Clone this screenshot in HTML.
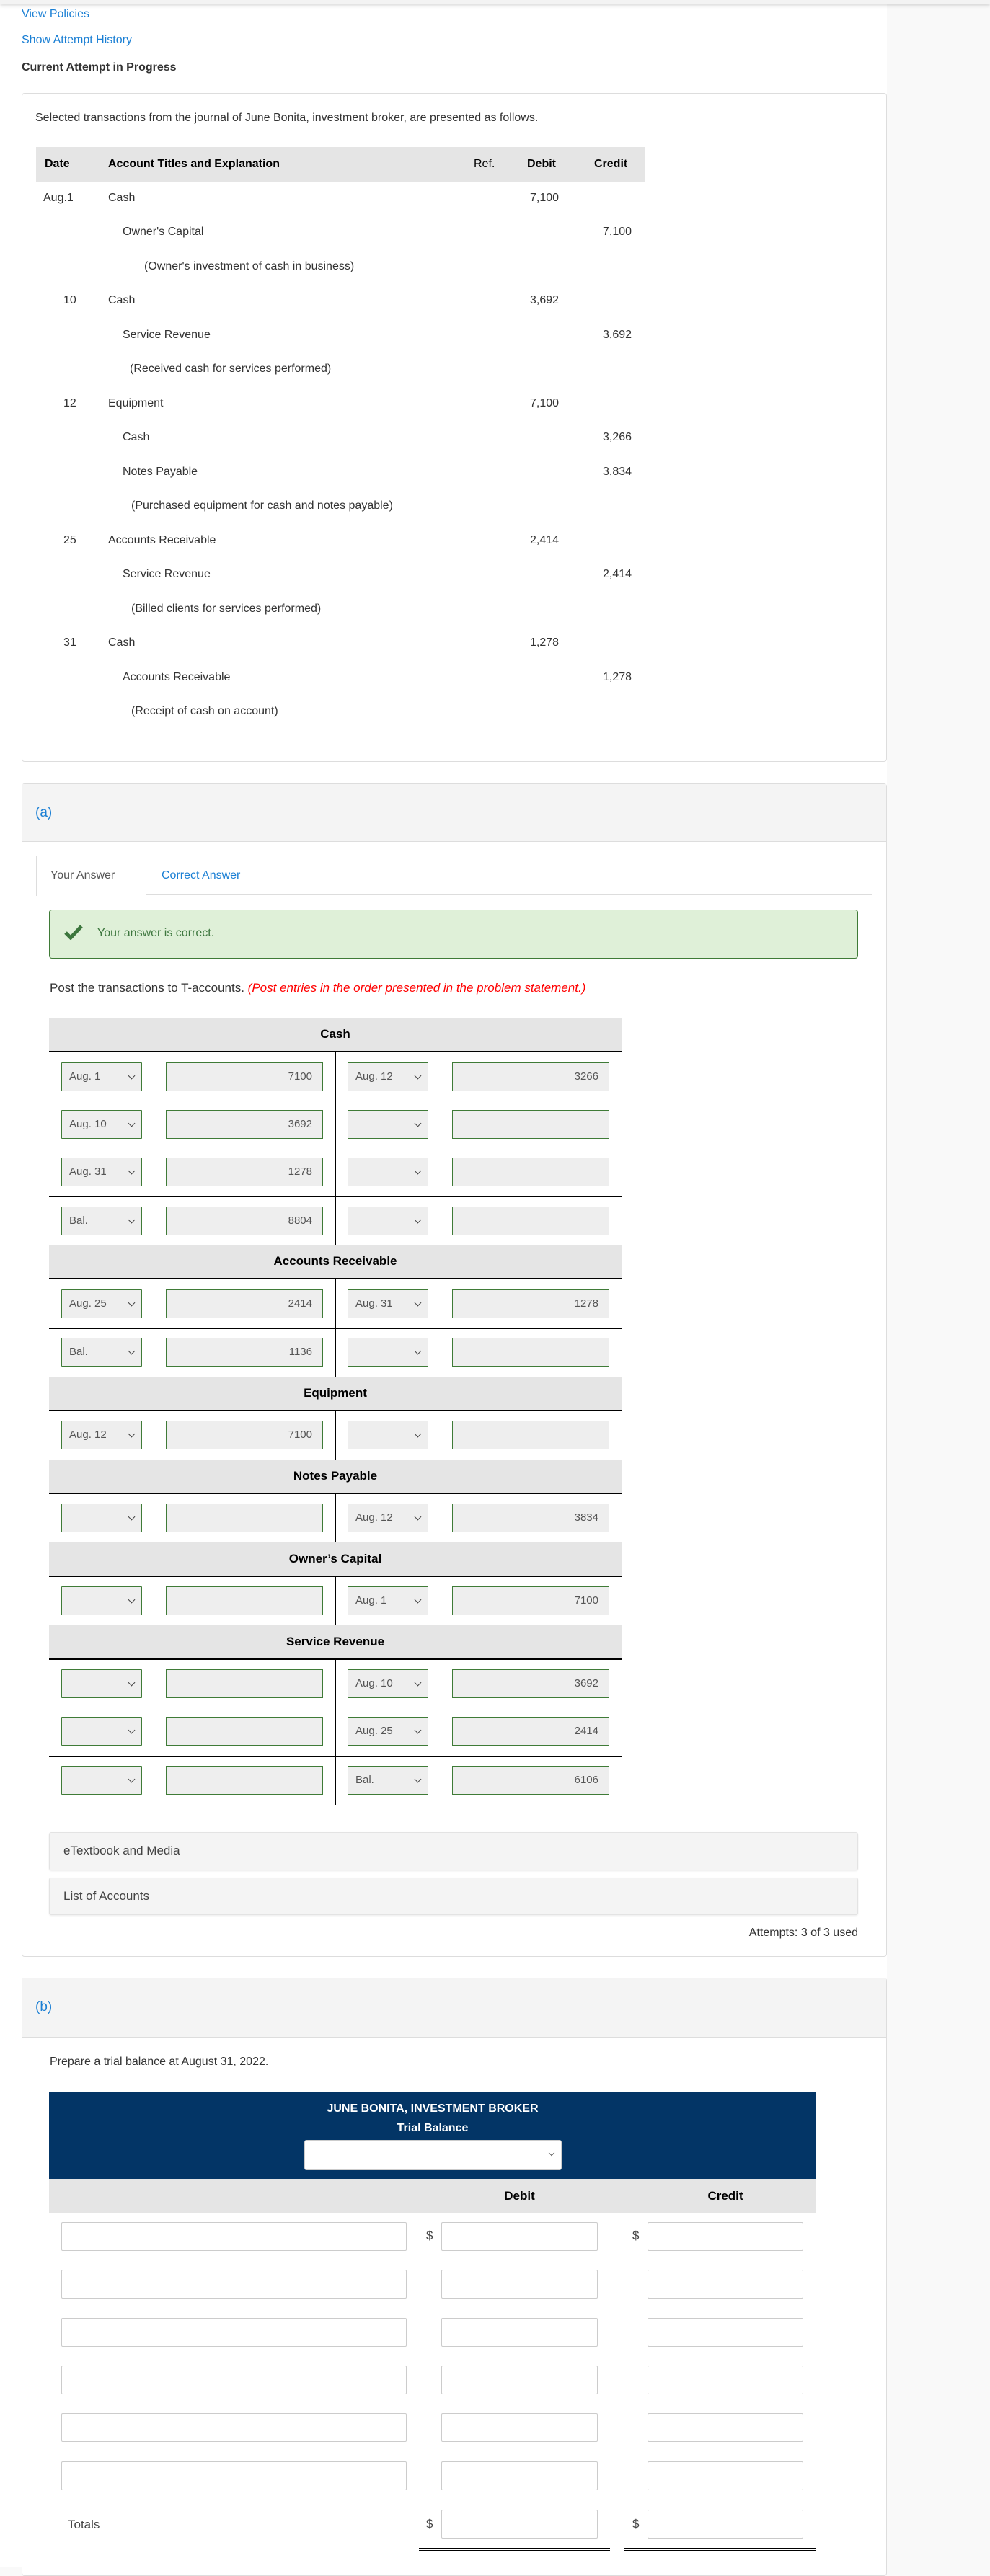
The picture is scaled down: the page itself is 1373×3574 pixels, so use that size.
<!DOCTYPE html>
<html><head><meta charset="utf-8"><style>
*{box-sizing:border-box;margin:0;padding:0}
body{width:1373px;height:3562px;background:#f9f9f9;font-family:"Liberation Sans",sans-serif;color:#333;position:relative;overflow:hidden}
.a{position:absolute}
.t{position:absolute;white-space:nowrap;font-size:16px;line-height:20px}
.panel{position:absolute;left:0;top:0;width:1230px;height:3562px;background:#fff}
.shadow{position:absolute;left:0;top:0;width:1373px;height:6px;background:#f3f3f3;box-shadow:0 2px 5px rgba(0,0,0,.15)}
.box{position:absolute;left:30px;width:1200px;border:1px solid #ddd;border-radius:4px;background:#fff}
.s{position:absolute;width:112px;height:40px;border:1px solid #3f7b37;background:#eee;font-size:15px;color:#555;line-height:38px;padding-left:10px;border-radius:1px}
.s::after{content:"";position:absolute;right:10px;top:14px;width:6px;height:6px;border-right:1.5px solid #444;border-bottom:1.5px solid #444;transform:rotate(45deg)}
.i{position:absolute;width:218px;height:40px;border:1px solid #3f7b37;background:#eee;font-size:15px;color:#555;line-height:38px;text-align:right;padding-right:14px}
.h{position:absolute;left:68px;width:794px;height:48px;background:#e5e5e5;border-bottom:2px solid #000;text-align:center;font-weight:bold;font-size:17px;line-height:46px;color:#000}
.hl{position:absolute;left:68px;width:794px;height:2px;background:#000}
.vl{position:absolute;left:464px;width:2px;background:#000}
.w{position:absolute;height:40px;border:1px solid #ccc;background:#fff;border-radius:2px}
.dl{position:absolute;font-size:17px;color:#444}
</style></head><body>
<div class="panel"></div>
<div class="shadow"></div>

<div class="t" style="left:30px;top:10px;color:#1a7fd4;font-size:16px">View Policies</div>
<div class="t" style="left:30px;top:46px;color:#1a7fd4;font-size:16px">Show Attempt History</div>
<div class="t" style="left:30px;top:84px;color:#333;font-size:16px;font-weight:bold">Current Attempt in Progress</div>
<div class="a" style="left:30px;top:116px;width:1200px;height:1px;background:#e5e5e5"></div>

<div class="box" style="top:129px;height:928px"></div>
<div class="t" style="left:49px;top:154px;font-size:16px">Selected transactions from the journal of June Bonita, investment broker, are presented as follows.</div>
<div class="a" style="left:50px;top:204px;width:845px;height:48px;background:#e5e5e5"></div>
<div class="t" style="left:62px;top:218px;font-weight:bold;color:#000">Date</div>
<div class="t" style="left:150px;top:218px;font-weight:bold;color:#000">Account Titles and Explanation</div>
<div class="t" style="left:657px;top:218px;color:#000">Ref.</div>
<div class="t" style="left:731px;top:218px;font-weight:bold;color:#000">Debit</div>
<div class="t" style="left:824px;top:218px;font-weight:bold;color:#000">Credit</div>

<div class="t" style="left:60px;top:265px">Aug.1</div><div class="t" style="left:150px;top:265px">Cash</div><div class="t" style="left:735px;top:265px">7,100</div>
<div class="t" style="left:170px;top:312px">Owner's Capital</div><div class="t" style="left:836px;top:312px">7,100</div>
<div class="t" style="left:200px;top:360px">(Owner's investment of cash in business)</div>
<div class="t" style="left:88px;top:407px">10</div><div class="t" style="left:150px;top:407px">Cash</div><div class="t" style="left:735px;top:407px">3,692</div>
<div class="t" style="left:170px;top:455px">Service Revenue</div><div class="t" style="left:836px;top:455px">3,692</div>
<div class="t" style="left:180px;top:502px">(Received cash for services performed)</div>
<div class="t" style="left:88px;top:550px">12</div><div class="t" style="left:150px;top:550px">Equipment</div><div class="t" style="left:735px;top:550px">7,100</div>
<div class="t" style="left:170px;top:597px">Cash</div><div class="t" style="left:836px;top:597px">3,266</div>
<div class="t" style="left:170px;top:645px">Notes Payable</div><div class="t" style="left:836px;top:645px">3,834</div>
<div class="t" style="left:182px;top:692px">(Purchased equipment for cash and notes payable)</div>
<div class="t" style="left:88px;top:740px">25</div><div class="t" style="left:150px;top:740px">Accounts Receivable</div><div class="t" style="left:735px;top:740px">2,414</div>
<div class="t" style="left:170px;top:787px">Service Revenue</div><div class="t" style="left:836px;top:787px">2,414</div>
<div class="t" style="left:182px;top:835px">(Billed clients for services performed)</div>
<div class="t" style="left:88px;top:882px">31</div><div class="t" style="left:150px;top:882px">Cash</div><div class="t" style="left:735px;top:882px">1,278</div>
<div class="t" style="left:170px;top:930px">Accounts Receivable</div><div class="t" style="left:836px;top:930px">1,278</div>
<div class="t" style="left:182px;top:977px">(Receipt of cash on account)</div>

<!-- (a) -->
<div class="box" style="top:1087px;height:1628px"></div>
<div class="a" style="left:31px;top:1088px;width:1198px;height:80px;background:#f4f4f4;border-bottom:1px solid #ddd"></div>
<div class="t" style="left:49px;top:1118px;color:#1a7fd4;font-size:19px">(a)</div>
<div class="a" style="left:50px;top:1187px;width:153px;height:56px;border:1px solid #ddd;border-bottom:none;background:#fff"></div>
<div class="a" style="left:202px;top:1241px;width:1008px;height:1px;background:#ddd"></div>
<div class="t" style="left:70px;top:1205px;font-size:16px;color:#555">Your Answer</div>
<div class="t" style="left:224px;top:1205px;font-size:16px;color:#1a7fd4">Correct Answer</div>
<div class="a" style="left:68px;top:1262px;width:1122px;height:68px;background:#dff0d8;border:1px solid #3f7b37;border-radius:4px"></div>
<svg class="a" style="left:89px;top:1282px" width="26" height="22" viewBox="0 0 26 22"><path d="M2 12 L9 19 L24 3" fill="none" stroke="#3c763d" stroke-width="5"/></svg>
<div class="t" style="left:135px;top:1285px;font-size:16px;color:#3c763d">Your answer is correct.</div>
<div class="t" style="left:69px;top:1361px;font-size:17px">Post the transactions to T-accounts. <i style="color:#f00">(Post entries in the order presented in the problem statement.)</i></div>

<!-- Cash -->
<div class="h" style="top:1412px">Cash</div>
<div class="vl" style="top:1460px;height:267px"></div>
<div class="s" style="left:85px;top:1474px">Aug. 1</div><div class="i" style="left:230px;top:1474px">7100</div><div class="s" style="left:482px;top:1474px">Aug. 12</div><div class="i" style="left:627px;top:1474px">3266</div>
<div class="s" style="left:85px;top:1540px">Aug. 10</div><div class="i" style="left:230px;top:1540px">3692</div><div class="s" style="left:482px;top:1540px"></div><div class="i" style="left:627px;top:1540px"></div>
<div class="s" style="left:85px;top:1606px">Aug. 31</div><div class="i" style="left:230px;top:1606px">1278</div><div class="s" style="left:482px;top:1606px"></div><div class="i" style="left:627px;top:1606px"></div>
<div class="hl" style="top:1659px"></div>
<div class="s" style="left:85px;top:1674px">Bal.</div><div class="i" style="left:230px;top:1674px">8804</div><div class="s" style="left:482px;top:1674px"></div><div class="i" style="left:627px;top:1674px"></div>

<!-- AR -->
<div class="h" style="top:1727px">Accounts Receivable</div>
<div class="vl" style="top:1775px;height:135px"></div>
<div class="s" style="left:85px;top:1789px">Aug. 25</div><div class="i" style="left:230px;top:1789px">2414</div><div class="s" style="left:482px;top:1789px">Aug. 31</div><div class="i" style="left:627px;top:1789px">1278</div>
<div class="hl" style="top:1842px"></div>
<div class="s" style="left:85px;top:1856px">Bal.</div><div class="i" style="left:230px;top:1856px">1136</div><div class="s" style="left:482px;top:1856px"></div><div class="i" style="left:627px;top:1856px"></div>

<!-- Equipment -->
<div class="h" style="top:1910px">Equipment</div>
<div class="vl" style="top:1958px;height:67px"></div>
<div class="s" style="left:85px;top:1971px">Aug. 12</div><div class="i" style="left:230px;top:1971px">7100</div><div class="s" style="left:482px;top:1971px"></div><div class="i" style="left:627px;top:1971px"></div>

<!-- NP -->
<div class="h" style="top:2025px">Notes Payable</div>
<div class="vl" style="top:2073px;height:67px"></div>
<div class="s" style="left:85px;top:2086px"></div><div class="i" style="left:230px;top:2086px"></div><div class="s" style="left:482px;top:2086px">Aug. 12</div><div class="i" style="left:627px;top:2086px">3834</div>

<!-- OC -->
<div class="h" style="top:2140px">Owner’s Capital</div>
<div class="vl" style="top:2188px;height:67px"></div>
<div class="s" style="left:85px;top:2201px"></div><div class="i" style="left:230px;top:2201px"></div><div class="s" style="left:482px;top:2201px">Aug. 1</div><div class="i" style="left:627px;top:2201px">7100</div>

<!-- SR -->
<div class="h" style="top:2255px">Service Revenue</div>
<div class="vl" style="top:2303px;height:201px"></div>
<div class="s" style="left:85px;top:2316px"></div><div class="i" style="left:230px;top:2316px"></div><div class="s" style="left:482px;top:2316px">Aug. 10</div><div class="i" style="left:627px;top:2316px">3692</div>
<div class="s" style="left:85px;top:2382px"></div><div class="i" style="left:230px;top:2382px"></div><div class="s" style="left:482px;top:2382px">Aug. 25</div><div class="i" style="left:627px;top:2382px">2414</div>
<div class="hl" style="top:2436px"></div>
<div class="s" style="left:85px;top:2450px"></div><div class="i" style="left:230px;top:2450px"></div><div class="s" style="left:482px;top:2450px">Bal.</div><div class="i" style="left:627px;top:2450px">6106</div>

<div class="a" style="left:68px;top:2542px;width:1122px;height:53px;background:#f4f4f4;border:1px solid #e3e3e3;border-radius:3px;box-shadow:0 1px 2px rgba(0,0,0,.08)"></div>
<div class="t" style="left:88px;top:2558px;font-size:17px;color:#444">eTextbook and Media</div>
<div class="a" style="left:68px;top:2605px;width:1122px;height:52px;background:#f4f4f4;border:1px solid #e3e3e3;border-radius:3px;box-shadow:0 1px 2px rgba(0,0,0,.08)"></div>
<div class="t" style="left:88px;top:2621px;font-size:17px;color:#444">List of Accounts</div>
<div class="t" style="left:1001px;top:2672px;font-size:16px;color:#333;width:189px;text-align:right">Attempts: 3 of 3 used</div>

<!-- (b) -->
<div class="box" style="top:2744px;height:830px"></div>
<div class="a" style="left:31px;top:2745px;width:1198px;height:82px;background:#f4f4f4;border-bottom:1px solid #ddd"></div>
<div class="t" style="left:49px;top:2775px;color:#1a7fd4;font-size:19px">(b)</div>
<div class="t" style="left:69px;top:2851px;font-size:16px">Prepare a trial balance at August 31, 2022.</div>
<div class="a" style="left:68px;top:2902px;width:1064px;height:121px;background:#033566"></div>
<div class="t" style="left:68px;top:2916px;width:1064px;text-align:center;color:#fff;font-weight:bold;font-size:16px">JUNE BONITA, INVESTMENT BROKER</div>
<div class="t" style="left:68px;top:2943px;width:1064px;text-align:center;color:#fff;font-weight:bold;font-size:16px">Trial Balance</div>
<div class="a" style="left:422px;top:2969px;width:357px;height:42px;background:#fff;border:1px solid #ccc;border-radius:3px"></div>
<div class="a" style="left:762px;top:2984px;width:6px;height:6px;border-right:1.5px solid #555;border-bottom:1.5px solid #555;transform:rotate(45deg)"></div>
<div class="a" style="left:68px;top:3023px;width:1064px;height:48px;background:#e5e5e5"></div>
<div class="t" style="left:612px;top:3037px;width:217px;text-align:center;font-weight:bold;color:#000;font-size:17px">Debit</div>
<div class="t" style="left:898px;top:3037px;width:216px;text-align:center;font-weight:bold;color:#000;font-size:17px">Credit</div>

<div class="w" style="left:85px;top:3083px;width:479px"></div><div class="dl" style="left:591px;top:3092px">$</div><div class="w" style="left:612px;top:3083px;width:217px"></div><div class="dl" style="left:877px;top:3092px">$</div><div class="w" style="left:898px;top:3083px;width:216px"></div>
<div class="w" style="left:85px;top:3149px;width:479px"></div><div class="w" style="left:612px;top:3149px;width:217px"></div><div class="w" style="left:898px;top:3149px;width:216px"></div>
<div class="w" style="left:85px;top:3216px;width:479px"></div><div class="w" style="left:612px;top:3216px;width:217px"></div><div class="w" style="left:898px;top:3216px;width:216px"></div>
<div class="w" style="left:85px;top:3282px;width:479px"></div><div class="w" style="left:612px;top:3282px;width:217px"></div><div class="w" style="left:898px;top:3282px;width:216px"></div>
<div class="w" style="left:85px;top:3348px;width:479px"></div><div class="w" style="left:612px;top:3348px;width:217px"></div><div class="w" style="left:898px;top:3348px;width:216px"></div>
<div class="w" style="left:85px;top:3415px;width:479px"></div><div class="w" style="left:612px;top:3415px;width:217px"></div><div class="w" style="left:898px;top:3415px;width:216px"></div>
<div class="a" style="left:581px;top:3468px;width:265px;height:1px;background:#000"></div>
<div class="a" style="left:866px;top:3468px;width:266px;height:1px;background:#000"></div>
<div class="t" style="left:94px;top:3493px;font-size:17px;color:#444">Totals</div>
<div class="dl" style="left:591px;top:3492px">$</div><div class="w" style="left:612px;top:3482px;width:217px"></div>
<div class="dl" style="left:877px;top:3492px">$</div><div class="w" style="left:898px;top:3482px;width:216px"></div>
<div class="a" style="left:581px;top:3535px;width:265px;height:4px;border-top:1px solid #000;border-bottom:1px solid #000"></div>
<div class="a" style="left:866px;top:3535px;width:266px;height:4px;border-top:1px solid #000;border-bottom:1px solid #000"></div>
</body></html>
